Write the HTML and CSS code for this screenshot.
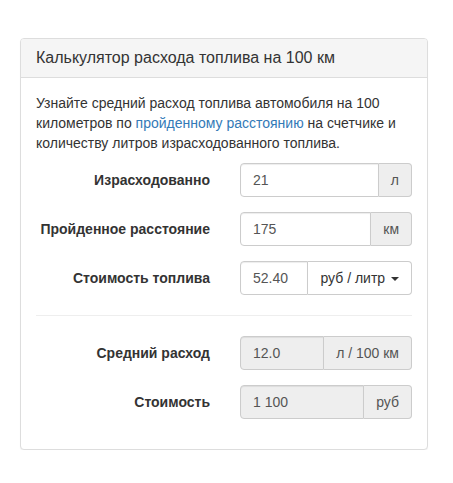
FILE: index.html
```html
<!DOCTYPE html>
<html lang="ru">
<head>
<meta charset="utf-8">
<title>Калькулятор расхода топлива</title>
<link rel="stylesheet" href="styles.css">
</head>
<body>
<div class="page">
  <div class="panel">
    <div class="panel-heading"><h3 class="panel-title">Калькулятор расхода топлива на 100 км</h3></div>
    <div class="panel-body">
      <p class="intro">Узнайте средний расход топлива автомобиля на 100 километров по <a href="#">пройденному расстоянию</a> на счетчике и количеству литров израсходованного топлива.</p>
      <div class="form-group">
        <label class="label-col">Израсходованно</label>
        <div class="field-col">
          <div class="input-group">
            <input class="form-control" type="text" value="21">
            <span class="addon">л</span>
          </div>
        </div>
      </div>
      <div class="form-group">
        <label class="label-col">Пройденное расстояние</label>
        <div class="field-col">
          <div class="input-group">
            <input class="form-control" type="text" value="175">
            <span class="addon">км</span>
          </div>
        </div>
      </div>
      <div class="form-group">
        <label class="label-col">Стоимость топлива</label>
        <div class="field-col">
          <div class="input-group">
            <input class="form-control" type="text" value="52.40">
            <button class="btn-dropdown" type="button">руб / литр <span class="caret"></span></button>
          </div>
        </div>
      </div>
      <hr class="divider">
      <div class="form-group">
        <label class="label-col">Средний расход</label>
        <div class="field-col">
          <div class="input-group">
            <input class="form-control readonly" type="text" value="12.0" readonly>
            <span class="addon">л / 100 км</span>
          </div>
        </div>
      </div>
      <div class="form-group">
        <label class="label-col">Стоимость</label>
        <div class="field-col">
          <div class="input-group">
            <input class="form-control readonly" type="text" value="1 100" readonly>
            <span class="addon">руб</span>
          </div>
        </div>
      </div>
    </div>
  </div>
</div>
</body>
</html>
```
FILE: styles.css
```css
* { box-sizing: border-box; }
html, body {
  margin: 0;
  background: #fff;
  font-family: "Liberation Sans", Arial, sans-serif;
  font-size: 14px;
  line-height: 20px;
  color: #333;
}
.page {
  padding: 38px 0 0 20px;
}
.panel {
  width: 408px;
  border: 1px solid #ddd;
  border-radius: 4px;
  background: #fff;
  box-shadow: 0 1px 1px rgba(0,0,0,0.05);
}
.panel-heading {
  background: #f5f5f5;
  border-bottom: 1px solid #ddd;
  border-radius: 3px 3px 0 0;
  padding: 10px 15px;
}
.panel-title {
  margin: 0;
  font-size: 16px;
  font-weight: normal;
  line-height: 17.6px;
  color: #333;
}
.panel-body {
  padding: 15px;
}
.intro {
  margin: 0 0 10px;
}
.intro a {
  color: #337ab7;
  text-decoration: none;
}
.form-group {
  display: flex;
  align-items: center;
  margin: 0 -15px 15px;
}
.label-col {
  flex: none;
  width: 204px;
  padding: 0 15px;
  text-align: right;
  font-weight: bold;
}
.field-col {
  flex: 1;
  min-width: 0;
  padding: 0 15px;
}
.input-group {
  display: flex;
  height: 34px;
}
.form-control {
  flex: 1;
  min-width: 0;
  height: 34px;
  padding: 6px 12px;
  border: 1px solid #ccc;
  border-radius: 4px 0 0 4px;
  font-family: inherit;
  font-size: 14px;
  color: #555;
  background: #fff;
  box-shadow: inset 0 1px 1px rgba(0,0,0,0.075);
  outline: none;
}
.form-control.readonly {
  background: #eee;
}
.addon {
  flex: none;
  padding: 6px 12px;
  border: 1px solid #ccc;
  border-left: 0;
  border-radius: 0 4px 4px 0;
  background: #eee;
  color: #555;
  font-size: 14px;
  line-height: 20px;
  text-align: center;
}
.btn-dropdown {
  flex: none;
  padding: 6px 12px;
  border: 1px solid #ccc;
  border-left: 0;
  border-radius: 0 4px 4px 0;
  background: #fff;
  color: #333;
  font-family: inherit;
  font-size: 14px;
  line-height: 20px;
}
.caret {
  display: inline-block;
  width: 0;
  height: 0;
  margin-left: 2px;
  vertical-align: middle;
  border-top: 4px solid #333;
  border-left: 4px solid transparent;
  border-right: 4px solid transparent;
}
.divider {
  margin: 20px 0;
  border: 0;
  border-top: 1px solid #eee;
}
```
